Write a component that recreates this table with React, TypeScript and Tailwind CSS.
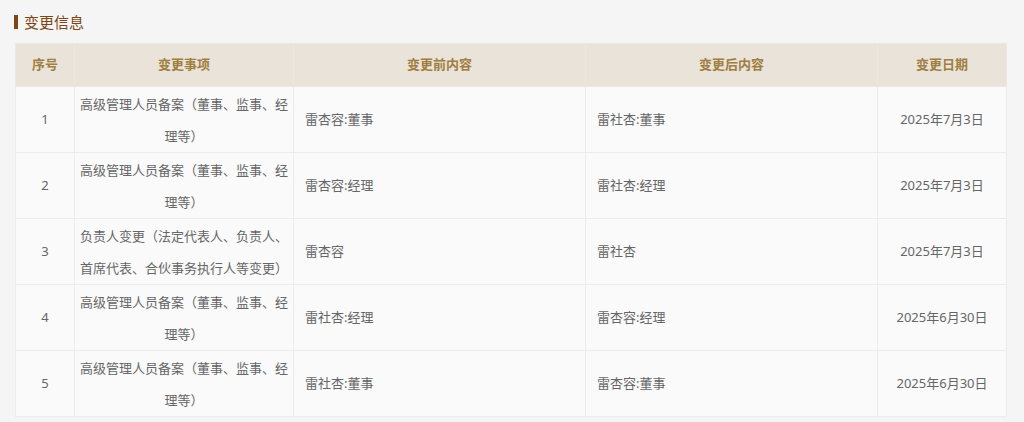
import React from "react";

const rows = [
  { no: 1, item: "高级管理人员备案（董事、监事、经理等）", before: "雷杏容:董事", after: "雷社杏:董事", date: "2025年7月3日" },
  { no: 2, item: "高级管理人员备案（董事、监事、经理等）", before: "雷杏容:经理", after: "雷社杏:经理", date: "2025年7月3日" },
  { no: 3, item: "负责人变更（法定代表人、负责人、首席代表、合伙事务执行人等变更）", before: "雷杏容", after: "雷社杏", date: "2025年7月3日" },
  { no: 4, item: "高级管理人员备案（董事、监事、经理等）", before: "雷社杏:经理", after: "雷杏容:经理", date: "2025年6月30日" },
  { no: 5, item: "高级管理人员备案（董事、监事、经理等）", before: "雷社杏:董事", after: "雷杏容:董事", date: "2025年6月30日" },
];

export default function App() {
  return (
    <div
      className="w-[1024px] h-[422px] bg-[#f5f5f5] pt-[13px] pl-[14px] pr-[18px]"
      style={{ fontFamily: '"Noto Sans", "Noto Sans CJK SC", sans-serif' }}
    >
      {/* title */}
      <div className="flex items-center h-[18px]">
        <span className="w-[4px] h-[14px] bg-[#7c4616]" />
        <span className="ml-[6px] text-[15px] leading-[18px] text-[#7c4616]">变更信息</span>
      </div>

      <table className="mt-[12px] ml-[1px] w-[991px] border-collapse table-fixed text-[13px] text-[#666666]">
        <colgroup>
          <col className="w-[59px]" />
          <col className="w-[219px]" />
          <col className="w-[292px]" />
          <col className="w-[292px]" />
          <col className="w-[129px]" />
        </colgroup>
        <thead>
          <tr className="h-[43px] bg-[#e9e3d9] text-[#a07e3f]">
            <th className="border border-[#ece8e1] font-bold">序号</th>
            <th className="border border-[#ece8e1] font-bold">变更事项</th>
            <th className="border border-[#ece8e1] font-bold">变更前内容</th>
            <th className="border border-[#ece8e1] font-bold">变更后内容</th>
            <th className="border border-[#ece8e1] font-bold">变更日期</th>
          </tr>
        </thead>
        <tbody className="bg-[#fafafa]">
          {rows.map((r) => (
            <tr key={r.no} className="h-[66px]">
              <td className="border border-[#ececec] text-center">{r.no}</td>
              <td className="border border-[#ececec] text-center px-[5px] leading-[32px]">{r.item}</td>
              <td className="border border-[#ececec] px-[11px]">{r.before}</td>
              <td className="border border-[#ececec] px-[11px]">{r.after}</td>
              <td className="border border-[#ececec] text-center">{r.date}</td>
            </tr>
          ))}
        </tbody>
      </table>
    </div>
  );
}
